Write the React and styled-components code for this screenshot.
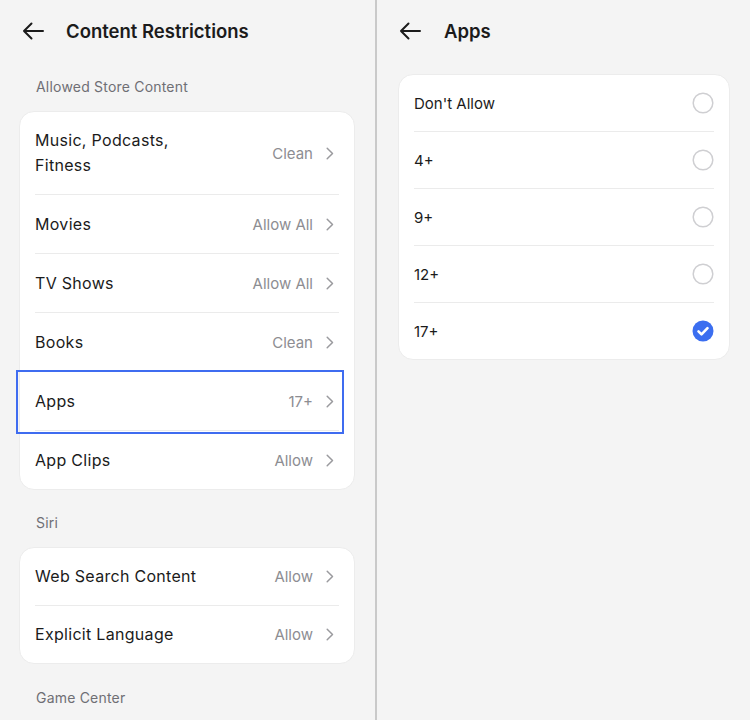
import styled, { createGlobalStyle } from 'styled-components';

const GlobalStyle = createGlobalStyle`
  html, body {
    margin: 0;
    padding: 0;
    background: #f4f4f4;
    font-family: Inter, "Noto Sans", sans-serif;
    color: #1b1b1b;
  }
`;

const Screen = styled.div`
  display: flex;
  width: 750px;
  height: 720px;
  overflow: hidden;
  background: #f4f4f4;
`;

const Pane = styled.div`
  width: ${(p) => p.$width}px;
  flex-shrink: 0;
  display: flex;
  flex-direction: column;
  & > * {
    flex-shrink: 0;
  }
`;

const Divider = styled.div`
  width: 2px;
  background: #c9c9c9;
  flex-shrink: 0;
`;

const Header = styled.div`
  height: 62px;
  display: flex;
  align-items: center;
  gap: ${(p) => p.$gap}px;
  padding-left: ${(p) => p.$left}px;
  box-sizing: border-box;
`;

const Title = styled.div`
  font-size: 18.5px;
  font-weight: 600;
  color: #1b1b1b;
`;

const SectionLabel = styled.div`
  padding: ${(p) => p.$top}px 36px 13px;
  font-size: 14px;
  line-height: 22px;
  letter-spacing: 0.2px;
  color: #6f6f74;
`;

const Card = styled.div`
  margin: ${(p) => p.$margin};
  background: #fff;
  border-radius: 15px;
  border: 1px solid #ececec;
  padding: 0 15px;
`;

const Row = styled.div`
  position: relative;
  display: flex;
  align-items: center;
  justify-content: space-between;
  min-height: ${(p) => p.$h}px;
  border-bottom: 1px solid #ebebeb;
  &:last-child {
    border-bottom: none;
  }
  ${(p) =>
    p.$highlight &&
    `
    &::after {
      content: '';
      position: absolute;
      left: -19px;
      right: -5px;
      top: -2px;
      bottom: -4px;
      border: 2px solid #3f6cf0;
    }
  `}
`;

const Label = styled.div`
  font-size: ${(p) => (p.$compact ? 15 : 16)}px;
  line-height: 25px;
  letter-spacing: ${(p) => (p.$compact ? 0 : 0.3)}px;
  color: #1b1b1b;
  max-width: ${(p) => (p.$wrap ? '150px' : 'none')};
`;

const Trail = styled.div`
  display: flex;
  align-items: center;
  gap: 13px;
  padding-right: ${(p) => p.$pad}px;
`;

const Value = styled.span`
  font-size: 15px;
  color: #8d8d92;
`;

const BackArrow = () => (
  <svg width="22" height="18" viewBox="0 0 22 18" fill="none">
    <path d="M21 9H2M9.5 1.5L2 9l7.5 7.5" stroke="#1b1b1b" strokeWidth="2" strokeLinecap="round" strokeLinejoin="round" />
  </svg>
);

const Chevron = () => (
  <svg width="8" height="13" viewBox="0 0 8 13" fill="none">
    <path d="M1.2 1.2L6.5 6.5 1.2 11.8" stroke="#9a9a9e" strokeWidth="1.5" strokeLinecap="round" strokeLinejoin="round" />
  </svg>
);

const Radio = ({ checked }) =>
  checked ? (
    <svg width="22" height="22" viewBox="0 0 22 22">
      <circle cx="11" cy="11" r="10.5" fill="#3b6ef0" />
      <path d="M6.5 11.3l3 3 6-6.2" stroke="#fff" strokeWidth="2.6" fill="none" strokeLinecap="round" strokeLinejoin="round" />
    </svg>
  ) : (
    <svg width="22" height="22" viewBox="0 0 22 22">
      <circle cx="11" cy="11" r="9.8" fill="none" stroke="#cfcfd2" strokeWidth="1.5" />
    </svg>
  );

const storeItems = [
  { label: 'Music, Podcasts, Fitness', value: 'Clean', h: 82 },
  { label: 'Movies', value: 'Allow All' },
  { label: 'TV Shows', value: 'Allow All' },
  { label: 'Books', value: 'Clean' },
  { label: 'Apps', value: '17+', highlight: true },
  { label: 'App Clips', value: 'Allow' },
];

const siriItems = [
  { label: 'Web Search Content', value: 'Allow', h: 57 },
  { label: 'Explicit Language', value: 'Allow', h: 57 },
];

const ratings = ["Don't Allow", '4+', '9+', '12+', '17+'];

const NavRow = ({ item }) => (
  <Row $h={item.h || 58} $highlight={item.highlight}>
    <Label $wrap={item.h > 70}>{item.label}</Label>
    <Trail $pad={5}>
      <Value>{item.value}</Value>
      <Chevron />
    </Trail>
  </Row>
);

export default function App() {
  return (
    <>
      <GlobalStyle />
      <Screen>
        <Pane $width={375}>
          <Header $left={22} $gap={22}>
            <BackArrow />
            <Title>Content Restrictions</Title>
          </Header>
          <SectionLabel $top={14}>Allowed Store Content</SectionLabel>
          <Card $margin="0 20px 0 19px">
            {storeItems.map((item) => (
              <NavRow key={item.label} item={item} />
            ))}
          </Card>
          <SectionLabel $top={22}>Siri</SectionLabel>
          <Card $margin="0 20px 0 19px">
            {siriItems.map((item) => (
              <NavRow key={item.label} item={item} />
            ))}
          </Card>
          <SectionLabel $top={23}>Game Center</SectionLabel>
        </Pane>
        <Divider />
        <Pane $width={373}>
          <Header $left={22} $gap={23}>
            <BackArrow />
            <Title>Apps</Title>
          </Header>
          <Card $margin="12px 20px 0 21px">
            {ratings.map((r) => (
              <Row key={r} $h={56}>
                <Label $compact>{r}</Label>
                <Trail $pad={0}>
                  <Radio checked={r === '17+'} />
                </Trail>
              </Row>
            ))}
          </Card>
        </Pane>
      </Screen>
    </>
  );
}
